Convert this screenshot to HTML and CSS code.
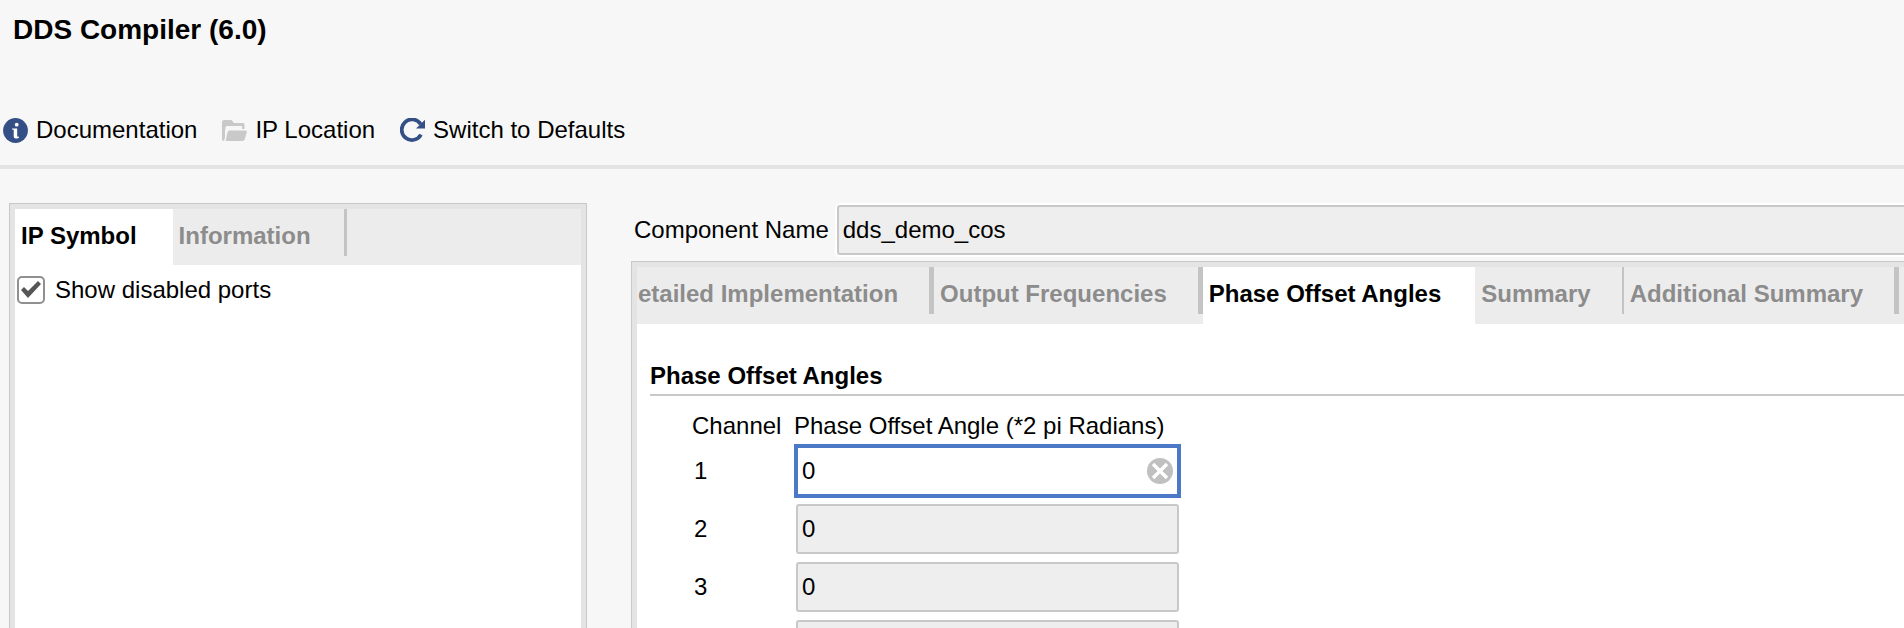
FILE: index.html
```html
<!DOCTYPE html>
<html lang="en">
<head>
<meta charset="utf-8">
<title>DDS Compiler (6.0)</title>
<link rel="stylesheet" href="styles.css">
</head>
<body>
<header class="header">
  <h1 class="title">DDS Compiler (6.0)</h1>
  <nav class="toolbar" aria-label="IP actions">
    <button class="tool" type="button">
      <svg class="icon" viewBox="0 0 25 25" aria-hidden="true">
        <circle cx="12.500" cy="12.500" r="12.400" fill="#344f86"/>
        <circle cx="13.700" cy="6.700" r="1.900" fill="#fff"/>
        <path d="M9 10.400h5.200v7.600q0 .8.700.7l1-.2v1.200q-1.600.9-3.200.9-2 0-2-2v-6.400q0-.6-.6-.6H9z" fill="#fff"/>
      </svg>
      Documentation
    </button>
    <button class="tool" type="button">
      <svg class="icon" viewBox="0 0 25 25" aria-hidden="true">
        <path d="M0 21V4q0-2 2-2h7.500l2.500 3h9q1.500 0 1.500 1.500V11H20V8H5q-1.200 0-1.400 1.200L3 13v6.500L2 23q-2 0-2-2z" fill="#c9c9c9"/>
        <path d="M7.500 12.500h16q1.800 0 1.300 1.700l-2 7q-.5 1.800-2.200 1.800H3.600l2-9q.4-1.500 1.900-1.500z" fill="#c9c9c9"/>
      </svg>
      IP Location
    </button>
    <button class="tool" type="button">
      <svg class="icon" viewBox="0 0 25 25" aria-hidden="true">
        <path d="M20.700 6.200A10.300 10.300 0 1 0 21 16.700" fill="none" stroke="#344f86" stroke-width="3.700"/>
        <path d="M25 1.800V10.500H16z" fill="#344f86"/>
      </svg>
      Switch to Defaults
    </button>
  </nav>
</header>
<main class="workspace">
  <section class="panel symbol-panel">
    <div class="tabs" role="tablist">
      <button class="tab active" role="tab" aria-selected="true" type="button">IP Symbol</button>
      <button class="tab sep-medium" role="tab" type="button">Information</button>
    </div>
    <div class="symbol-body">
      <label class="check"><input class="check-box" type="checkbox" checked>Show disabled ports</label>
    </div>
  </section>
  <section class="config">
    <div class="component">
      <label for="component-name">Component Name</label>
      <input class="field component-field" id="component-name" type="text" value="dds_demo_cos" readonly>
    </div>
    <div class="panel config-panel">
      <div class="tabs" role="tablist">
        <button class="tab flush sep-wide" role="tab" type="button">etailed Implementation</button>
        <button class="tab sep-wide" role="tab" type="button">Output Frequencies</button>
        <button class="tab active" role="tab" aria-selected="true" type="button">Phase Offset Angles</button>
        <button class="tab sep-thin" role="tab" type="button">Summary</button>
        <button class="tab sep-wide" role="tab" type="button">Additional Summary</button>
      </div>
      <div class="config-body">
        <h2 class="section-title">Phase Offset Angles</h2>
        <table class="angles">
          <thead>
            <tr><th class="channel" scope="col">Channel</th><th scope="col">Phase Offset Angle (*2 pi Radians)</th></tr>
          </thead>
          <tbody>
            <tr><td><label for="angle-1">1</label></td><td><div class="angle focused"><input class="field" id="angle-1" type="text" value="0"><button class="clear" type="button" aria-label="Clear"><svg class="clear-icon" viewBox="0 0 26 26" aria-hidden="true"><circle cx="13" cy="13" r="13" fill="#c0c0c0"/><path d="M6 6l14 14M20 6L6 20" stroke="#fff" stroke-width="3.400"/></svg></button></div></td></tr>
            <tr><td><label for="angle-2">2</label></td><td><div class="angle"><input class="field" id="angle-2" type="text" value="0" readonly></div></td></tr>
            <tr><td><label for="angle-3">3</label></td><td><div class="angle"><input class="field" id="angle-3" type="text" value="0" readonly></div></td></tr>
            <tr><td></td><td><div class="angle"><input class="field" type="text" aria-label="Next channel" readonly></div></td></tr>
          </tbody>
        </table>
      </div>
    </div>
  </section>
</main>
</body>
</html>
```

FILE: styles.css
```css
* {
  box-sizing: border-box;
}

body {
  margin: 0;
  height: 100vh;
  overflow: hidden;
  display: flex;
  flex-direction: column;
  background: #f7f7f7;
  color: #000;
  font: 24px/28px "Liberation Sans", Arial, sans-serif;
}

button,
input {
  font: inherit;
  color: inherit;
}

button {
  border: 0;
  background: none;
}

.header {
  padding: 14px 0 20px;
  border-bottom: 4px solid #e4e4e4;
}

.title {
  margin: 0;
  padding-left: 13px;
  font-size: 28px;
  line-height: 32px;
}

.toolbar {
  display: flex;
  gap: 25px;
  margin-top: 69px;
  padding-left: 3px;
}

.tool {
  display: flex;
  align-items: center;
  gap: 8px;
  padding: 0;
  height: 30px;
  white-space: nowrap;
}

.icon {
  width: 25px;
  height: 25px;
}

.workspace {
  flex: 1;
  min-height: 0;
  display: flex;
  gap: 44px;
  padding: 34px 0 0 9px;
}

.panel {
  border: 1px solid #c8c8c8;
  border-bottom: 0;
  background: #fff;
  overflow: hidden;
}

.symbol-panel {
  flex: 0 0 578px;
  padding: 5px 5px 0;
  box-shadow: inset 5px 5px 0 #e4e4e4, inset -5px 0 0 #e4e4e4;
}

.tabs {
  display: flex;
  background: #ececec;
}

.tab {
  height: 56px;
  padding: 0 36px 2px 6px;
  font-weight: bold;
  color: #8c8c8c;
  white-space: nowrap;
  background: linear-gradient(#c4c4c4, #c4c4c4) right top / 0 47px no-repeat;
}

.tab.active {
  color: #000;
  background: #fff;
}

.tab.flush {
  padding-left: 1px;
}

.sep-thin {
  padding-right: 33px;
  background-size: 2px 47px;
}

.sep-medium {
  background-size: 3px 47px;
}

.sep-wide {
  background-size: 5px 47px;
}

.symbol-body {
  padding: 11px 2px;
}

.check {
  display: flex;
  align-items: center;
  gap: 10px;
}

.check-box {
  appearance: none;
  width: 28px;
  height: 28px;
  margin: 0;
  border: 2px solid #909090;
  border-radius: 5px;
  background: #fff;
}

.check-box:checked::before {
  content: "";
  display: block;
  width: 24px;
  height: 24px;
  background: #555;
  clip-path: polygon(2px 12px, 5px 9px, 9px 13px, 19px 3px, 22px 6px, 9px 20px);
}

.config {
  flex: 1;
  min-width: 0;
  display: flex;
  flex-direction: column;
}

.component {
  display: flex;
  align-items: center;
  gap: 8px;
  padding: 2px 0 6px 3px;
  white-space: nowrap;
}

.field {
  display: block;
  width: 100%;
  height: 50px;
  padding: 0 4px;
  border: 2px solid #c8c8c8;
  border-radius: 3px;
  background: #eee;
  outline: 0;
}

.component-field {
  flex: 1;
  min-width: 0;
  border-right: 0;
  border-radius: 3px 0 0 3px;
  box-shadow: 0 0 0 2px #fff;
}

.config-panel {
  flex: 1;
  min-height: 0;
  border-right: 0;
  padding: 5px 0 0 5px;
  box-shadow: inset 5px 5px 0 #e4e4e4;
}

.config-panel .tab {
  height: 57px;
  padding-bottom: 4px;
}

.config-panel .tab.active {
  padding-right: 34px;
}

.config-body {
  padding: 38px 0 0 13px;
}

.section-title {
  margin: 0;
  padding-bottom: 4px;
  border-bottom: 2px solid #c8c8c8;
  font-size: 24px;
}

.angles {
  margin: 16px 0 0 42px;
  border-collapse: collapse;
}

.angles th {
  padding: 0 0 2px;
  font-weight: normal;
  text-align: left;
  white-space: nowrap;
}

.angles .channel {
  width: 102px;
}

.angles td {
  padding: 4px 0 4px 2px;
}

.angle {
  position: relative;
  width: 383px;
}

.focused .field {
  border-color: #6a92dc;
  border-width: 1px;
  border-radius: 0;
  padding: 0 5px;
  background: #fff;
  box-shadow: 0 0 0 2px #4c78c8, inset 0 0 0 1px #4c78c8;
  border-color: #4c78c8;
}

.clear {
  position: absolute;
  top: 12px;
  right: 6px;
  width: 26px;
  height: 26px;
  padding: 0;
}

.clear-icon {
  display: block;
  width: 26px;
  height: 26px;
}
```
